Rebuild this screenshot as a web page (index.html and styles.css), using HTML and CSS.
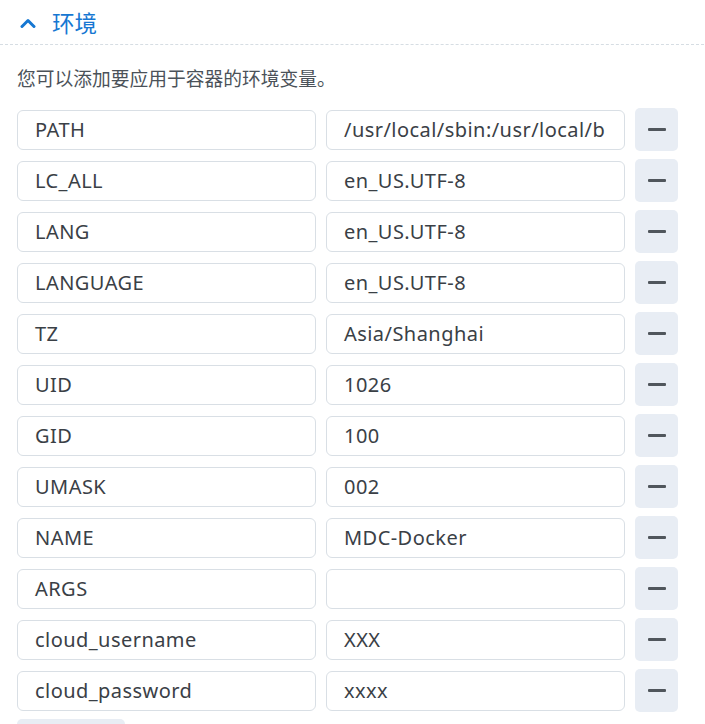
FILE: index.html
```html
<!DOCTYPE html>
<html lang="zh">
<head>
<meta charset="utf-8">
<link rel="stylesheet" href="styles.css">
</head>
<body>
<div class="section">
  <div class="header">
    <svg class="chev" width="16" height="10" viewBox="0 0 16 10"><path d="M2 8.5 L8 2.5 L14 8.5" fill="none" stroke="#1677d2" stroke-width="3" stroke-linecap="round" stroke-linejoin="round"/></svg>
    <span class="title">环境</span>
  </div>
  <div class="body">
    <p class="desc">您可以添加要应用于容器的环境变量。</p>
    <div class="rows">
      <div class="row"><div class="field">PATH</div><div class="field">/usr/local/sbin:/usr/local/b</div><button class="minus"><span></span></button></div>
      <div class="row"><div class="field">LC_ALL</div><div class="field">en_US.UTF-8</div><button class="minus"><span></span></button></div>
      <div class="row"><div class="field">LANG</div><div class="field">en_US.UTF-8</div><button class="minus"><span></span></button></div>
      <div class="row"><div class="field">LANGUAGE</div><div class="field">en_US.UTF-8</div><button class="minus"><span></span></button></div>
      <div class="row"><div class="field">TZ</div><div class="field">Asia/Shanghai</div><button class="minus"><span></span></button></div>
      <div class="row"><div class="field">UID</div><div class="field">1026</div><button class="minus"><span></span></button></div>
      <div class="row"><div class="field">GID</div><div class="field">100</div><button class="minus"><span></span></button></div>
      <div class="row"><div class="field">UMASK</div><div class="field">002</div><button class="minus"><span></span></button></div>
      <div class="row"><div class="field">NAME</div><div class="field">MDC-Docker</div><button class="minus"><span></span></button></div>
      <div class="row"><div class="field">ARGS</div><div class="field"></div><button class="minus"><span></span></button></div>
      <div class="row"><div class="field">cloud_username</div><div class="field">XXX</div><button class="minus"><span></span></button></div>
      <div class="row"><div class="field">cloud_password</div><div class="field">xxxx</div><button class="minus"><span></span></button></div>
    </div>
    <div class="add"></div>
  </div>
</div>
</body>
</html>
```
FILE: styles.css
```css
html, body {
  margin: 0;
  padding: 0;
  background: #ffffff;
}
body {
  font-family: "Noto Sans", "Noto Sans CJK SC", sans-serif;
  color: #333a40;
  overflow: hidden;
}
.section {
  width: 704px;
}
.header {
  height: 45px;
  border-bottom: 1px dashed #d6dde3;
  display: flex;
  align-items: center;
  padding-left: 20px;
  gap: 16px;
  box-sizing: border-box;
}
.chev {
  display: block;
  margin-top: 1px;
}
.title {
  font-family: "Noto Sans CJK SC", sans-serif;
  font-size: 22.5px;
  color: #1677d2;
  line-height: 30px;
}
.body {
  padding-left: 17px;
}
.desc {
  margin: 0;
  padding-top: 19px;
  font-family: "Noto Sans CJK SC", sans-serif;
  font-size: 18.75px;
  line-height: 28px;
  color: #4b5259;
  height: 44px;
}
.rows {
  display: flex;
  flex-direction: column;
  gap: 8px;
}
.row {
  display: flex;
  align-items: center;
  height: 43px;
  gap: 10px;
}
.field {
  width: 299px;
  height: 40px;
  box-sizing: border-box;
  border: 1px solid #d9dfe5;
  border-radius: 6px;
  padding-left: 17px;
  font-size: 20px;
  letter-spacing: 0.45px;
  line-height: 38px;
  white-space: nowrap;
  overflow: hidden;
  color: #3a4046;
}
.minus {
  width: 43px;
  height: 43px;
  border: none;
  border-radius: 5px;
  background: #e8edf4;
  padding: 0;
  display: flex;
  align-items: center;
  justify-content: center;
}
.minus span {
  display: block;
  width: 18px;
  height: 3px;
  border-radius: 1px;
  background: #50565c;
}
.add {
  margin-top: 7px;
  width: 108px;
  height: 30px;
  border-radius: 5px;
  background: #e8edf4;
}
```
